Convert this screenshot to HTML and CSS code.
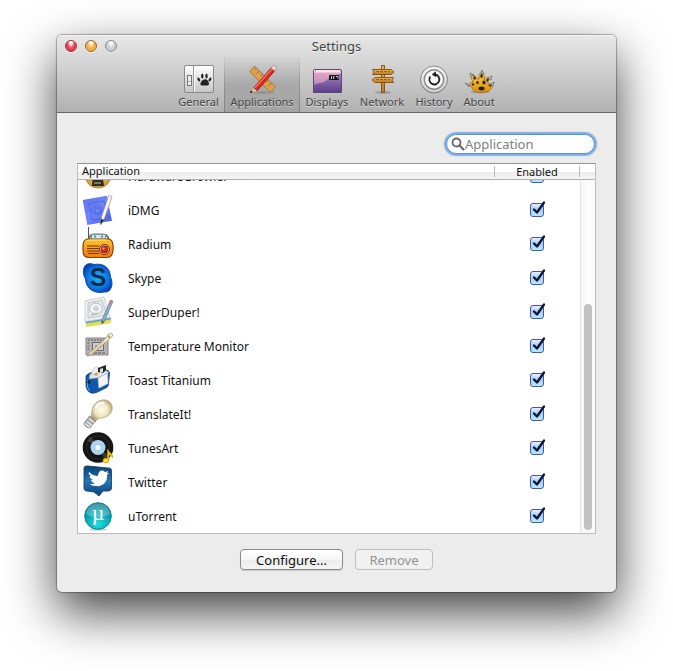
FILE: index.html
```html
<!DOCTYPE html>
<html lang="en">
<head>
<meta charset="utf-8">
<title>Settings</title>
<link rel="stylesheet" href="styles.css">
</head>
<body>
<svg class="defs" aria-hidden="true">
  <defs>
    <linearGradient id="plate" x2="0" y2="1"><stop stop-color="#fff"/><stop offset="1" stop-color="#c6c6c6"/></linearGradient>
    <linearGradient id="sunset" x2="0" y2="1"><stop stop-color="#f0afbf"/><stop offset=".5" stop-color="#c596bd"/><stop offset="1" stop-color="#7b5ba6"/></linearGradient>
    <linearGradient id="dune" x2="0" y2="1"><stop stop-color="#a184bf"/><stop offset="1" stop-color="#5a3b8a"/></linearGradient>
    <linearGradient id="wood" x2="0" y2="1"><stop stop-color="#f0b24c"/><stop offset="1" stop-color="#b87722"/></linearGradient>
    <linearGradient id="ring" x2="0" y2="1"><stop stop-color="#fafafa"/><stop offset="1" stop-color="#a9a9a9"/></linearGradient>
    <linearGradient id="fur" x2="0" y2="1"><stop stop-color="#ffcf3d"/><stop offset="1" stop-color="#dc8d10"/></linearGradient>
    <linearGradient id="blue" x2="1" y2="1"><stop stop-color="#5a74f2"/><stop offset=".5" stop-color="#6f86f8"/><stop offset="1" stop-color="#4a58e0"/></linearGradient>
    <linearGradient id="radio" x2="0" y2="1"><stop stop-color="#ffc52e"/><stop offset="1" stop-color="#f27a0c"/></linearGradient>
    <radialGradient id="skype" cx=".5" cy=".5" r=".55"><stop stop-color="#22b4f8"/><stop offset=".6" stop-color="#0b7fe6"/><stop offset="1" stop-color="#0a3fb5"/></radialGradient>
    <radialGradient id="bulb" cx=".5" cy=".45"><stop stop-color="#fffef2"/><stop offset=".6" stop-color="#f1e7c2"/><stop offset="1" stop-color="#b8a677"/></radialGradient>
    <linearGradient id="bird" x2="0" y2="1"><stop stop-color="#0b3f70"/><stop offset=".5" stop-color="#2477b8"/><stop offset="1" stop-color="#0c4274"/></linearGradient>
    <radialGradient id="torrent" cx=".5" cy=".8" r=".8"><stop stop-color="#1de0e0"/><stop offset=".6" stop-color="#0ba3b4"/><stop offset="1" stop-color="#087084"/></radialGradient>
    <radialGradient id="gold"><stop stop-color="#ffe27a"/><stop offset="1" stop-color="#c89a2c"/></radialGradient>
    <linearGradient id="box" x2="0" y2="1"><stop stop-color="#eef6ff"/><stop offset=".45" stop-color="#a5cdf7"/><stop offset="1" stop-color="#b9eaff"/></linearGradient>
    <linearGradient id="boxline" x2="0" y2="1"><stop stop-color="#5a4a9c"/><stop offset="1" stop-color="#3f5f9c"/></linearGradient>
    <symbol id="check" viewBox="-1 0 18 18">
      <rect x="1.500" y="3.500" width="13" height="13" rx="2.500" fill="url(#box)" stroke="url(#boxline)"/>
      <path d="M5 9.500 8 12.500 15 2.500" fill="none" stroke="#0a1630" stroke-width="2.300" stroke-linejoin="round" stroke-linecap="round"/>
    </symbol>
  </defs>
</svg>

<main class="window">
  <header class="chrome">
    <div class="titlebar">
      <div class="lights">
        <button class="light red" aria-label="Close"></button>
        <button class="light amber" aria-label="Minimize"></button>
        <button class="light gray" aria-label="Zoom" disabled></button>
      </div>
      <h1 class="title">Settings</h1>
    </div>
    <nav class="toolbar">
      <button class="tool">
        <svg class="icon" viewBox="0 0 32 32"><rect x="1.500" y="2.500" width="29" height="27" rx="1.500" fill="url(#plate)" stroke="#8a8a8a"/><path d="M10.500 3v26" stroke="#999"/><path d="M11.500 3v26" stroke="#fff"/><rect x="4.500" y="12.500" width="4" height="10" fill="#eee" stroke="#777"/><path d="M5 18.500h3" stroke="#aaa"/><g fill="#222"><path d="M21.500 16.500c3-1 4 2.500 4.500 4 .4 2.400-2.500 2-4.500 2s-4.700.200-4-2.300c.6-1.700 2-3.700 4-3.700z"/><ellipse cx="15.800" cy="16.500" rx="1.100" ry="2.100" transform="rotate(-35 15.800 16.500)"/><ellipse cx="19.300" cy="13" rx="1.200" ry="2.500"/><ellipse cx="23.500" cy="13" rx="1.200" ry="2.500"/><ellipse cx="27" cy="16.500" rx="1.100" ry="2.100" transform="rotate(35 27 16.500)"/></g></svg>
        <span>General</span>
      </button>
      <button class="tool selected" aria-current="page">
        <svg class="icon" viewBox="0 0 32 32"><ellipse cx="17" cy="29.500" rx="12" ry="1.500" fill="#777" opacity=".4"/><path d="M8.500 3 29.500 24l-5 5.500L3.500 8.500z" fill="#dba052" stroke="#a06c2c" stroke-width=".8"/><path d="m10.500 5-2 2m5 1-3 3m6 0-2 2m5 1-3 3m6 0-2 2m5 1-3 3" stroke="#8a5a20" stroke-width=".7"/><path d="M7.500 25 25.500 4.500l3.500 3L11 28z" fill="#d6281d" stroke="#961710" stroke-width=".7"/><path d="M8.800 25 26.500 5.500" stroke="#ff7665" stroke-width="1.200"/><path d="m25 5 2-2.300c1.700-1 4.500 1 3.200 3L28.500 8z" fill="#ecd2d8" stroke="#a57b86" stroke-width=".7"/><path d="m7.500 25 3.500 3-6.500 2z" fill="#e9c493"/><path d="m5 27.500 2 1.500-3 1.200z" fill="#111"/></svg>
        <span>Applications</span>
      </button>
      <button class="tool">
        <svg class="icon" viewBox="0 0 32 32"><rect x="2" y="6" width="29" height="24" rx="1" fill="url(#sunset)"/><path d="M2 23c5-5 9-1 15-7 4-3 9-3 13-6v20H2z" fill="url(#dune)"/><path d="M2 6.500h29v3H2z" fill="#fae3ea"/><path d="M4 8h1m24 0h1" stroke="#b0607b"/><rect x="2.500" y="6.500" width="28" height="23" rx="1" fill="none" stroke="#5b4771"/><rect x="18" y="12" width="10" height="5" rx="1" fill="#171321"/><path d="M20.500 13v3m2 0v-2.500h1m1.500 0h2v2" stroke="#eee" stroke-width=".8" fill="none"/></svg>
        <span>Displays</span>
      </button>
      <button class="tool">
        <svg class="icon" viewBox="0 0 32 32"><ellipse cx="17" cy="29.500" rx="8" ry="1.300" fill="#777" opacity=".5"/><g stroke="#80500f" stroke-width=".9" fill="url(#wood)"><path d="M15.500 2.500h3v27h-3z"/><path d="M6.500 6.500h18.500l3 2.500-3 2.500H6.500l1.500-2.500z"/><path d="M27.500 14.500H9l-3 2.500 3 2.500h18.500l-1.500-2.500z"/></g><path d="M10 8.500h14M10 16.500h14" stroke="#8e5317" stroke-width=".8" stroke-dasharray="3 1"/></svg>
        <span>Network</span>
      </button>
      <button class="tool">
        <svg class="icon" viewBox="0 0 32 32"><circle cx="16" cy="16.500" r="13.500" fill="url(#ring)" stroke="#858585"/><circle cx="16" cy="16.500" r="11.700" fill="none" stroke="#f2f2f2"/><circle cx="16" cy="16.500" r="9.700" fill="#f7f7f7" stroke="#8b8b8b" stroke-width="1.400"/><path d="M12.300 13.500a5 5 0 1 0 4.700-2" fill="none" stroke="#222" stroke-width="1.800"/><path d="m17.800 8.300-4 3.300 4.200 2.700z" fill="#222"/></svg>
        <span>History</span>
      </button>
      <button class="tool">
        <svg class="icon" viewBox="0 0 32 32"><ellipse cx="17" cy="29" rx="10" ry="1.500" fill="#777" opacity=".45"/><path d="M6 22c0-2 2-3 4-2 0-3-3-5-2-7 2-2 5 0 6 3 1 0 1 0 2 0 0-3 0-6 2-6s4 3 3 7c1-2 3-3 5-2 1 2-2 3-1 6 2-1 5 0 4 3-1 4-6 5.500-11 5.500S9 28 9 24c-1 0-2-1-3-2z" fill="url(#fur)" stroke="#a36c0d" stroke-width=".8"/><g fill="#222"><ellipse cx="11.500" cy="15" rx="1.100" ry="1.700" transform="rotate(-25 11.500 15)"/><ellipse cx="18.500" cy="13" rx="1.200" ry="1.900"/><ellipse cx="24.500" cy="17" rx="1.100" ry="1.600" transform="rotate(25 24.500 17)"/><ellipse cx="10" cy="21.500" rx="1.300" ry="1"/><ellipse cx="18.500" cy="25.500" rx="3" ry="1.900"/><ellipse cx="14.500" cy="19.500" rx="1.200" ry="1.600"/><ellipse cx="21" cy="19.500" rx="1.600" ry="1.900"/><ellipse cx="27" cy="22.500" rx="1.300" ry="1"/></g><path d="m8 13-1-3 4 2zM18 10l1-3 2 4zM25 15l4-2-1 4zM28 21l3-2-1 4zM6 22l-4-2 4 4z" fill="#d5d9dd" stroke="#555c63" stroke-width=".7"/></svg>
        <span>About</span>
      </button>
    </nav>
  </header>

  <section class="content">
    <label class="search">
      <svg class="lens" viewBox="0 0 14 14" aria-hidden="true"><circle cx="5.500" cy="5.500" r="4" fill="none" stroke="#666" stroke-width="1.800"/><path d="m8.500 8.500 4 4" stroke="#666" stroke-width="2.200" stroke-linecap="round"/></svg>
      <input type="search" placeholder="Application" aria-label="Application">
    </label>

    <div class="list">
      <table class="apps">
        <thead>
          <tr><th scope="col">Application</th><th scope="col" class="center">Enabled</th><td></td></tr>
        </thead>
        <tbody>
          <tr>
            <td class="app"><svg class="icon" viewBox="0 0 32 32"><circle cx="16" cy="14" r="13" fill="url(#gold)" stroke="#b3893a"/><path d="M10 25c0-8 2-12 6-12s5 4 6 12z" fill="#332c22"/><path d="M12 22h7" stroke="#776" stroke-width="2"/></svg>HardwareGrowler</td>
            <td class="center"><label class="tick"><input type="checkbox" checked aria-label="Enable HardwareGrowler"><svg><use href="#check"/></svg></label></td>
          </tr>
          <tr>
            <td class="app"><svg class="icon" viewBox="0 0 32 32"><path d="m.7 5 24-4.200 5.300 25-24.700 4.200z" fill="url(#blue)"/><path d="m7 8.500 15-2.500L25.500 22 10 25z" fill="none" stroke="#4c60e0" stroke-width=".8"/><circle cx="15" cy="15" r="5" fill="none" stroke="#4c60e0" stroke-width=".8"/><path d="M13 12v6h4c2 0 2-5 0-5h-3" fill="none" stroke="#4c60e0"/><path d="M26.500 1c1.500-.8 3.500 0 3.300 1.500l-7 20-3.800 7 .5-8z" fill="#f6f6f6" stroke="#888" stroke-width=".7"/><path d="m19.300 24 2.500 1-3.500 5z" fill="#1b1b2a"/></svg>iDMG</td>
            <td class="center"><label class="tick"><input type="checkbox" checked aria-label="Enable iDMG"><svg><use href="#check"/></svg></label></td>
          </tr>
          <tr>
            <td class="app"><svg class="icon" viewBox="0 0 32 32"><path d="M6.500-2v12" stroke="#555"/><path d="M7 11c1-7 3-5.500 9-5.500s9-1.500 11 5.500" fill="none" stroke="#777" stroke-width="2"/><rect x="9.500" y="5.500" width="14" height="5" fill="#d7e5ea" stroke="#7a979d"/><path d="M12 7.500h2m5 0h2" stroke="#1ba8d6" stroke-width="2"/><path d="M5 10h22c4 1 4.500 5 4 11-.3 6-3 7.500-6 7.500H7c-4 0-6-2-6-7.500 0-6 0-10 4-11z" fill="url(#radio)" stroke="#8c3e08" stroke-width="1.200"/><path d="M4 13q1-2 4-2h17" fill="none" stroke="#ffe57b"/><path d="M5 17h12M5 19.500h12M5 22h12M6 24.500h11" stroke="#723409" stroke-width="1.100"/><circle cx="22.500" cy="20.500" r="5" fill="#f0c29a" stroke="#71200f"/><circle cx="22.500" cy="20.500" r="3.400" fill="#d82413" stroke="#71200f" stroke-width=".8"/><circle cx="21.500" cy="19.500" r="1.200" fill="#ff968a"/></svg>Radium</td>
            <td class="center"><label class="tick"><input type="checkbox" checked aria-label="Enable Radium"><svg><use href="#check"/></svg></label></td>
          </tr>
          <tr>
            <td class="app"><svg class="icon" viewBox="0 0 32 32"><path d="M2 5C3 0 9 0 12 1.500 21 0 28 4 28.500 14 32 21 29 30 22.500 29 14 31 4 27 3.500 16 1 12 1 8 2 5z" fill="url(#skype)" stroke="#0d49b4"/><text x="16" y="23" class="skype-letter">S</text></svg>Skype</td>
            <td class="center"><label class="tick"><input type="checkbox" checked aria-label="Enable Skype"><svg><use href="#check"/></svg></label></td>
          </tr>
          <tr>
            <td class="app"><svg class="icon" viewBox="0 0 32 32"><path d="m4 26 25-4v4L4 30z" fill="#e8dc4c"/><path d="m3 24.500 26-4v2l-25 4z" fill="#5aa5cf"/><path d="M3 4 22 0l6 20.500-25 4z" fill="#eef1f1" stroke="#c3cbcc" stroke-width=".8"/><path d="m6 6 14-3 5 15-19 3z" fill="#e4e9e9" stroke="#b4bdc0" stroke-width=".8"/><ellipse cx="14" cy="11.500" rx="6.500" ry="5.500" fill="#f0f3f4" stroke="#a7b1b5" stroke-width=".8"/><circle cx="14" cy="11.500" r="2" fill="#d9e0e2" stroke="#aab" stroke-width=".7"/><path d="m9 18.500 7-2.500" stroke="#a7b1b5"/><path d="m28.500 3 2.500 1.300L22 25l-2.300 2 .3-4z" fill="#86b0cf" stroke="#5d7b90" stroke-width=".7"/><path d="m28.500 3 2.500 1.300-1.300 2.700L27 6z" fill="#c78672"/><path d="m20 23.500 2 1.300-2.300 2.200z" fill="#604d3b"/></svg>SuperDuper!</td>
            <td class="center"><label class="tick"><input type="checkbox" checked aria-label="Enable SuperDuper!"><svg><use href="#check"/></svg></label></td>
          </tr>
          <tr>
            <td class="app"><svg class="icon" viewBox="0 0 32 32"><path d="M4 7h22v17H4z" fill="#b7b2b4" stroke="#8a8587"/><path d="M6 9h16M5.500 12h3m-3 3h3m-3 3h3" stroke="#5c565b" stroke-dasharray="2 1"/><path d="M10.500 11.500h11v8h-11z" fill="#d4d0d2" stroke="#6c676b"/><path d="M13 14h6v3h-6z" fill="#999"/><path d="M8 22h16" stroke="#5c565b" stroke-dasharray="3 1"/><path d="M27 3c2-1.500 4.500 0 3.300 2.300l-6 5.700L10 23l-4.500 2.500L7.500 22 22 9z" fill="#f2ecc9" stroke="#9a9270" stroke-width=".8"/><circle cx="27" cy="5.800" r="1.200" fill="#b2a05a"/><path d="M23 10.500 10 22" stroke="#c4b780" stroke-width=".8"/></svg>Temperature Monitor</td>
            <td class="center"><label class="tick"><input type="checkbox" checked aria-label="Enable Temperature Monitor"><svg><use href="#check"/></svg></label></td>
          </tr>
          <tr>
            <td class="app"><svg class="icon" viewBox="0 0 32 32"><path d="M4 11q1-2 4-3l16-3q3 0 3.500 3l-1 11q0 3-3 4l-9 4.500q-5 2-8-1-2.500-3-2.500-6z" fill="#1159a8" stroke="#0a397a" stroke-width=".8"/><path d="m8 9 16-3.500 3 2-12 5.500-8 1z" fill="#dfe8ef" stroke="#7a96b2" stroke-width=".6"/><path d="m16 13 9.500-5 .5 10.500-9 4.500z" fill="#f4f4f5" stroke="#bcc8d4" stroke-width=".8"/><path d="M10 10c-1-5 3-9 6-8l2 5z" fill="#e6f0f4" stroke="#a9c6d9" stroke-width=".6"/><path d="M12 10c0-2 3-3 4-2l-1 3z" fill="#ef9c31"/><path d="m16 3 8-3v5l-3 3-5-1z" fill="#272525"/><path d="m18 4 3-1v4l-3 1z" fill="#ddd"/><path d="M5.500 15v7l2 4" fill="none" stroke="#61a5e0"/><circle cx="7" cy="17" r="1.800" fill="#102544"/></svg>Toast Titanium</td>
            <td class="center"><label class="tick"><input type="checkbox" checked aria-label="Enable Toast Titanium"><svg><use href="#check"/></svg></label></td>
          </tr>
          <tr>
            <td class="app"><svg class="icon" viewBox="0 0 32 32"><path d="M8.500 18c2-3 .5-8 3.500-12C17-1 28-1 30 7c1.500 7-4 11-10 12-4 0-5 2-7 4z" fill="url(#bulb)" stroke="#b8ac8b" stroke-width=".8"/><path d="m7.500 17 6 5-5.500 7c-3 0-6-2.500-6-4.500z" fill="#aaa" stroke="#7d7d7d" stroke-width=".8"/><path d="m7 19.500 5 4m-7-1 5 4M3 24.500l5 4" stroke="#eee" stroke-width="1.300"/><path d="M14 9c1-4 5-6 8-5" stroke="#fff" fill="none" stroke-width="2"/></svg>TranslateIt!</td>
            <td class="center"><label class="tick"><input type="checkbox" checked aria-label="Enable TranslateIt!"><svg><use href="#check"/></svg></label></td>
          </tr>
          <tr>
            <td class="app"><svg class="icon" viewBox="0 0 32 32"><circle cx="16" cy="14.500" r="15.300" fill="#151515"/><circle cx="16" cy="14.500" r="11.500" fill="none" stroke="#2a2a2a"/><path d="m16 14.500-11-7 4-4zM16 14.500l10 8-3 4z" fill="#3c3c3c"/><circle cx="16" cy="14.500" r="7.500" fill="#add5ed"/><circle cx="16" cy="14.500" r="3.300" fill="#e8f4fa" stroke="#93c0dc" stroke-width=".7"/><circle cx="16" cy="14.500" r="1.300" fill="#fff"/><path d="M25.500 27V16c1 4 6 4 5 9-.5-2-2-3-3.500-3v5" fill="#f2c91b" stroke="#c89a0a" stroke-width=".7"/><ellipse cx="24" cy="27.500" rx="3" ry="2.300" fill="#ffdc2e" stroke="#c89a0a" stroke-width=".7"/></svg>TunesArt</td>
            <td class="center"><label class="tick"><input type="checkbox" checked aria-label="Enable TunesArt"><svg><use href="#check"/></svg></label></td>
          </tr>
          <tr>
            <td class="app"><svg class="icon" viewBox="0 0 32 32"><path d="M2 1c0-2 2-2 4-2l20 2c3 0 3.500 1 3.500 3v17c0 2-1.500 3-3.500 3h-5l-4 5-5-4-7-1c-2 0-3-1-3-3z" fill="url(#bird)" stroke="#0d365d" stroke-width=".8"/><path d="M7 5c3 3 6 4 9 4 0-5 4-7 7-4l3-1-1 2 2 0-2 2c1 7-5 12-11 11-3 0-5-1-6-2 2 0 4 0 5-1-2 0-4-2-4-3h2c-2-1-4-3-3-4l1 0c-2-1-3-3-2-4z" fill="#fff"/></svg>Twitter</td>
            <td class="center"><label class="tick"><input type="checkbox" checked aria-label="Enable Twitter"><svg><use href="#check"/></svg></label></td>
          </tr>
          <tr>
            <td class="app"><svg class="icon" viewBox="0 0 32 32"><ellipse cx="16" cy="28.500" rx="9" ry="1.300" fill="#aaa" opacity=".6"/><circle cx="16" cy="15" r="13.300" fill="url(#torrent)" stroke="#0b8393"/><path d="M4 13C5 5 11 2.500 16 2.500S27 5 28 13c-8 4-17 4-24 0z" fill="#fff" opacity=".25"/><text x="16" y="19" class="mu-letter">µ</text></svg>uTorrent</td>
            <td class="center"><label class="tick"><input type="checkbox" checked aria-label="Enable uTorrent"><svg><use href="#check"/></svg></label></td>
          </tr>
        </tbody>
      </table>
      <div class="scrollbar"><div class="thumb"></div></div>
    </div>

    <div class="actions">
      <button class="push configure">Configure...</button>
      <button class="push remove" disabled>Remove</button>
    </div>
  </section>
</main>
</body>
</html>
```
FILE: styles.css
```css
* { box-sizing: border-box; }

body {
  margin: 0;
  padding: 35px 57px 78px;
  background: #fff;
  color: #111;
  font: 12px/16px "Noto Sans", "Open Sans", sans-serif;
}

button, input { font: inherit; color: inherit; }
button { padding: 0; border: 0; background: none; }

.defs { position: absolute; width: 0; height: 0; }

.window {
  border-radius: 5px;
  background: #ececec;
  box-shadow: 0 0 1px 1px rgba(0, 0, 0, .3), 0 20px 50px rgba(0, 0, 0, .75);
}

.chrome {
  border-bottom: 1px solid #696969;
  border-radius: 5px 5px 0 0;
  background: linear-gradient(#e8e8e8, #d0d0d0 45%, #b1b1b1);
  box-shadow: inset 0 1px #f5f5f5;
  color: #444;
}

.titlebar {
  display: grid;
  grid-template-columns: 1fr auto 1fr;
  align-items: center;
  height: 22px;
  padding: 0 8px;
}

.lights { display: flex; gap: 8px; }

.light {
  width: 12px;
  height: 12px;
  border: 1px solid #777;
  border-radius: 50%;
  box-shadow: 0 1px #f5f5f5;
}
.red { border-color: #96303a; background: radial-gradient(ellipse at 50% 10%, #fff 0 15%, #f0566a 45%, #e0304a 65%, #ffa0a8); }
.amber { border-color: #9b6421; background: radial-gradient(ellipse at 50% 10%, #fff 0 15%, #f5b857 45%, #efa93f 65%, #fff590); }
.gray { border-color: #8a8a8a; background: radial-gradient(ellipse at 50% 10%, #fff 0 15%, #d0d0d0 50%, #c9c9c9 65%, #eaeaea); }

.title {
  margin: 0;
  font-size: 13px;
  font-weight: 400;
  line-height: 22px;
  text-shadow: 0 1px #f2f2f2;
}

.toolbar {
  display: grid;
  grid-template-columns: 51px 76px 54px 56px 48px 42px;
  justify-content: center;
}

.tool {
  display: flex;
  flex-direction: column;
  align-items: center;
  height: 55px;
  padding-top: 6px;
  font-size: 11px;
  line-height: 14px;
  text-shadow: 0 1px rgba(255, 255, 255, .5);
}
.selected {
  border: 1px solid;
  border-width: 0 1px;
  border-image: linear-gradient(rgba(90, 90, 90, 0), #808080) 1;
  background: linear-gradient(rgba(0, 0, 0, .02), rgba(0, 0, 0, .14) 50%, rgba(0, 0, 0, .08));
}

.icon { flex: none; width: 32px; height: 32px; overflow: visible; }

.content {
  display: flex;
  flex-direction: column;
  padding: 21px 20px 22px;
}

.search {
  display: flex;
  align-items: center;
  align-self: flex-end;
  width: 149px;
  height: 20px;
  margin-right: 1px;
  padding: 0 8px 0 4px;
  border: 1px solid #5b92cf;
  border-radius: 10px;
  background: #fff;
  box-shadow: 0 0 1px 2px #7fb0e4;
}
.lens { flex: none; width: 14px; height: 14px; }
.search input {
  appearance: none;
  width: 100%;
  min-width: 0;
  padding: 0;
  border: 0;
  outline: 0;
  background: none;
  font-size: 13px;
  line-height: 18px;
}
.search input::placeholder { color: #808080; }

.list {
  position: relative;
  margin-top: 9px;
  border: 1px solid #bcbcbc;
  border-top-color: #929292;
  background: #fff;
}

.apps, .apps thead, .apps tbody { display: block; }

.apps tr {
  display: grid;
  grid-template-columns: 1fr 85px 16px;
  align-items: center;
}
.apps th, .apps td { padding: 0; }

.apps thead {
  padding-bottom: 1px;
  border-bottom: 1px solid #b0b0b0;
  background: linear-gradient(#fff 50%, #ededed 55%, #f5f5f5);
  font-size: 11px;
  line-height: 14px;
}
.apps th { padding-left: 4px; font-weight: 400; text-align: left; }
.apps thead tr > :not(:first-child) {
  height: 11px;
  padding: 0;
  border-left: 1px solid #bbb;
  line-height: 11px;
}
.apps .center { text-align: center; }
.apps tbody .center { padding-bottom: 2px; }

/* The list is scrolled to its end, so the last row rests on the bottom edge. */
.apps tbody {
  display: flex;
  flex-direction: column;
  justify-content: flex-end;
  height: 353px;
  overflow: hidden;
}
.apps tbody tr { flex: none; height: 34px; }

.apps .app {
  display: flex;
  align-items: center;
  gap: 14px;
  padding: 2px 0 0 4px;
}

.tick { display: inline-grid; vertical-align: middle; }
.tick input, .tick svg { grid-area: 1 / 1; width: 18px; height: 18px; margin: 0; }
.tick input { appearance: none; }
.tick svg { pointer-events: none; }

.skype-letter { fill: #082b50; font: 700 25px "Liberation Sans", sans-serif; text-anchor: middle; }
.mu-letter { fill: #fff; font: 22px "Liberation Serif", serif; text-anchor: middle; }

.scrollbar {
  position: absolute;
  top: 16px;
  right: 0;
  bottom: 0;
  display: flex;
  flex-direction: column;
  justify-content: flex-end;
  width: 15px;
  padding: 3px;
  border-left: 1px solid #e5e5e5;
  background: linear-gradient(90deg, #f4f4f4, #fdfdfd 50%, #fafafa);
}
.thumb { width: 8px; height: 65%; border-radius: 4px; background: #c1c1c1; }

.actions {
  display: flex;
  justify-content: center;
  gap: 12px;
  margin-top: 15px;
}
.push {
  height: 21px;
  border: 1px solid #8b8b8b;
  border-radius: 4px;
  background: linear-gradient(#fff, #f6f6f6 50%, #ececec 52%, #f5f5f5);
  box-shadow: 0 1px 1px rgba(0, 0, 0, .15);
  font-size: 13px;
  line-height: 18px;
}
.configure { width: 103px; }
.remove { width: 78px; border-color: #bdbdbd; background: #f1f1f1; box-shadow: none; color: #929292; }
```
